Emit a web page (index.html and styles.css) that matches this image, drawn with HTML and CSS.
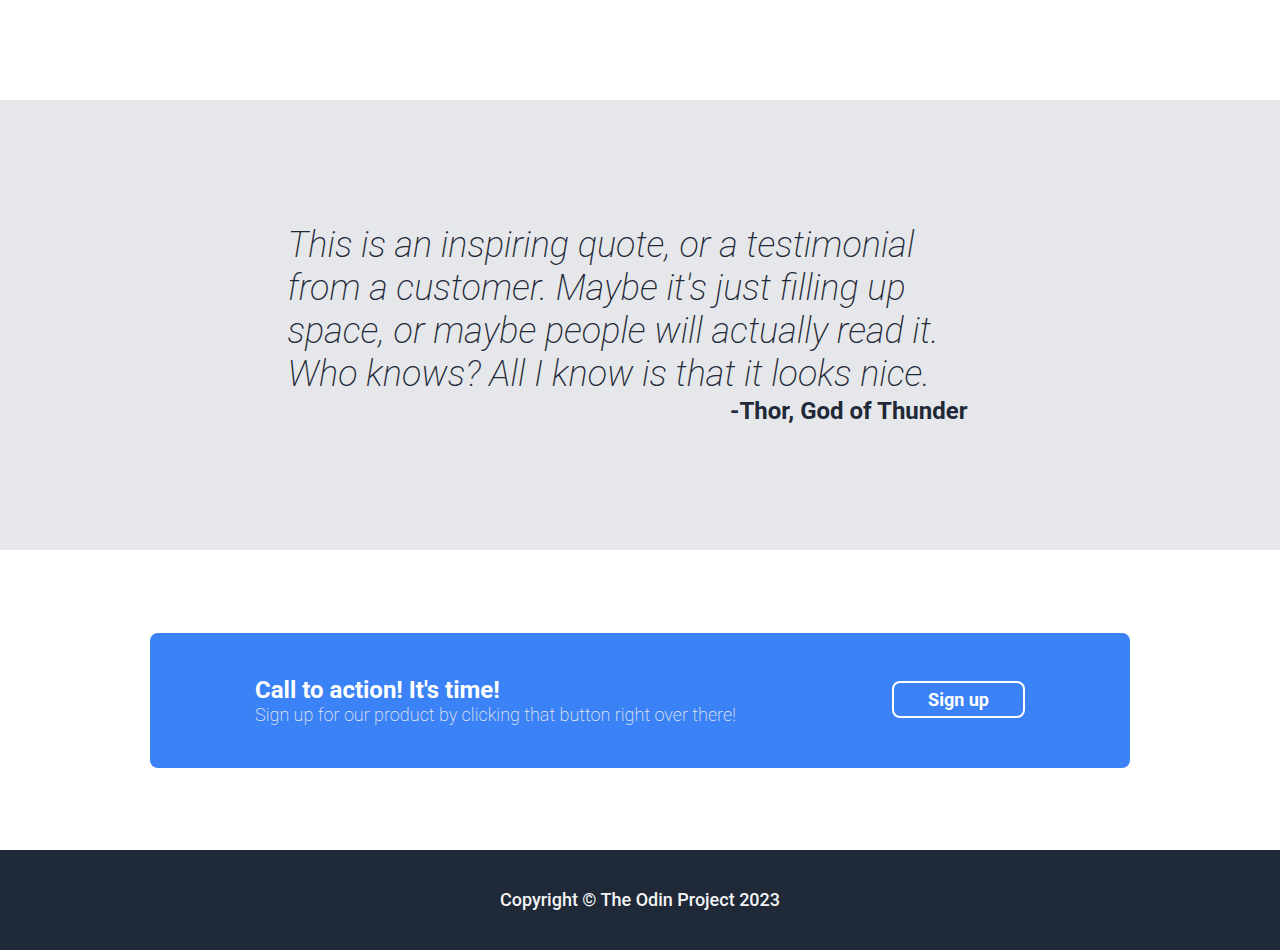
FILE: index.html
```html
<!DOCTYPE html>
<html lang="en">
<head>
<meta charset="utf-8">
<title>Landing</title>
<link rel="stylesheet" href="styles.css">
</head>
<body>
<div class="top"></div>
<section class="quote-section">
  <div class="quote-box">
    <p class="quote">This is an inspiring quote, or a testimonial from a customer. Maybe it's just filling up space, or maybe people will actually read it. Who knows? All I know is that it looks nice.</p>
    <p class="author">-Thor, God of Thunder</p>
  </div>
</section>
<section class="cta-section">
  <div class="cta">
    <div class="cta-text">
      <h2 class="cta-title">Call to action! It's time!</h2>
      <p class="cta-sub">Sign up for our product by clicking that button right over there!</p>
    </div>
    <button class="cta-btn">Sign up</button>
  </div>
</section>
<footer class="footer">Copyright © The Odin Project 2023</footer>
</body>
</html>
```
FILE: styles.css
```css
* { box-sizing: border-box; }
body {
  margin: 0;
  font-family: Roboto, "Liberation Sans", sans-serif;
  background: #fff;
}
.top { height: 100px; }
.quote-section {
  height: 450px;
  background: #e5e7eb;
  display: flex;
  align-items: center;
  justify-content: center;
}
.quote-box {
  width: 680px;
  margin-left: -25px;
  color: #1f2937;
}
.quote {
  margin: 0;
  font-size: 36px;
  font-weight: 200;
  font-style: italic;
  line-height: 43px;
}
.author {
  margin: 0;
  text-align: right;
  font-size: 24px;
  font-weight: 700;
  line-height: 30px;
}
.cta-section {
  height: 300px;
  display: flex;
  align-items: center;
  justify-content: center;
}
.cta {
  width: 980px;
  height: 135px;
  background: #3b82f6;
  border-radius: 8px;
  padding: 2px 105px 0;
  display: flex;
  align-items: center;
  justify-content: space-between;
  color: #fff;
}
.cta-title {
  margin: 0;
  font-size: 24px;
  font-weight: 700;
  line-height: 28px;
}
.cta-sub {
  margin: 0;
  font-size: 18px;
  font-weight: 200;
  line-height: 22px;
  color: #e5e7eb;
}
.cta-btn {
  width: 133px;
  height: 37px;
  margin-top: -3px;
  background: transparent;
  border: 2px solid #fff;
  border-radius: 8px;
  color: #fff;
  font-family: inherit;
  font-size: 18px;
  font-weight: 700;
}
.footer {
  height: 100px;
  background: #1f2937;
  color: #f3f4f6;
  display: flex;
  align-items: center;
  justify-content: center;
  font-size: 18px;
  font-weight: 500;
  padding-bottom: 2px;
}
```
